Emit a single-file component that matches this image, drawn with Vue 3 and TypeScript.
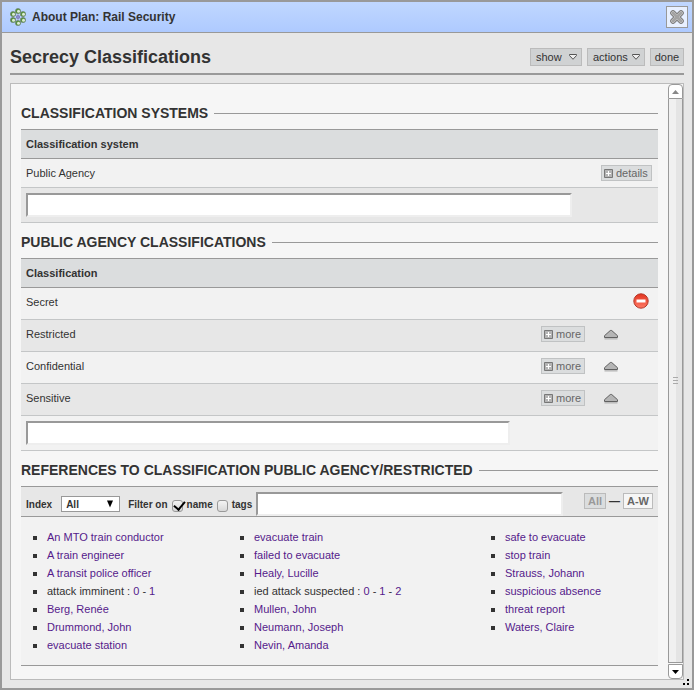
<script setup lang="ts">
import { ref } from 'vue'

interface RefPart {
  label: string
  linked: boolean
}

const link = (label: string): RefPart[] => [{ label, linked: true }]
const text = (label: string): RefPart => ({ label, linked: false })

const levels = ['Secret', 'Restricted', 'Confidential', 'Sensitive']

const columns: RefPart[][][] = [
  [
    link('An MTO train conductor'),
    link('A train engineer'),
    link('A transit police officer'),
    [text('attack imminent : '), ...link('0'), text(' - '), ...link('1')],
    link('Berg, Renée'),
    link('Drummond, John'),
    link('evacuate station'),
  ],
  [
    link('evacuate train'),
    link('failed to evacuate'),
    link('Healy, Lucille'),
    [text('ied attack suspected : '), ...link('0'), text(' - '), ...link('1'), text(' - '), ...link('2')],
    link('Mullen, John'),
    link('Neumann, Joseph'),
    link('Nevin, Amanda'),
  ],
  [
    link('safe to evacuate'),
    link('stop train'),
    link('Strauss, Johann'),
    link('suspicious absence'),
    link('threat report'),
    link('Waters, Claire'),
  ],
]

const petals = [
  [8, 3],
  [13, 6],
  [13, 12],
  [8, 15],
  [3, 12],
  [3, 6],
]

const newSystem = ref('')
const newLevel = ref('')
const indexOn = ref('All')
const byName = ref(true)
const byTags = ref(false)
const filter = ref('')
</script>

<template>
  <div class="window">
    <div class="titlebar">
      <svg class="logo" width="16" height="18" viewBox="0 0 16 18" aria-hidden="true">
        <path d="M8 3l5 3v6l-5 3-5-3V6zM8 3v12M3 6l10 6M13 6L3 12" fill="none" stroke="#a3a6c4" />
        <g v-for="([x, y], i) in petals" :key="i">
          <circle :cx="x" :cy="y" r="2.6" fill="#579239" stroke="#6b7d70" stroke-width=".6" />
          <circle :cx="x + 0.5" :cy="y + 0.3" r="1.5" fill="#dcebd6" />
        </g>
        <circle cx="8" cy="9" r="1.800" fill="#6a68b5" />
        <circle cx="8" cy="9" r=".8" fill="#b9bbe8" />
      </svg>
      <span class="caption">About Plan: Rail Security</span>
      <button class="close" type="button" aria-label="Close">
        <svg width="16" height="16" viewBox="0 0 16 16">
          <path d="M4 4l8 8M12 4l-8 8" stroke="#777" stroke-width="5.6" stroke-linecap="round" />
          <path d="M4 4l8 8M12 4l-8 8" stroke="#d0d0d0" stroke-width="3.8" stroke-linecap="round" />
          <path d="M4 4l8 8M12 4l-8 8" stroke="#a3a3a3" stroke-width="2.8" stroke-linecap="round" />
        </svg>
      </button>
    </div>

    <div class="body">
      <header class="header">
        <h1>Secrecy Classifications</h1>
        <div class="menu">
          <button v-for="name in ['show', 'actions']" :key="name" type="button" :class="name">
            {{ name }}
            <svg width="8" height="6" viewBox="0 0 8 6" aria-hidden="true">
              <path d="M.5.5h7v1L4 5.300.5 1.500z" fill="#eee" stroke="#555" />
            </svg>
          </button>
          <button type="button" class="done">done</button>
        </div>
      </header>

      <div class="panel">
        <main class="content">
          <h2><span>CLASSIFICATION SYSTEMS</span></h2>
          <table>
            <thead>
              <tr><th colspan="2">Classification system</th></tr>
            </thead>
            <tbody>
              <tr>
                <td>Public Agency</td>
                <td class="details-cell">
                  <button class="small" type="button">
                    <svg width="9" height="9" viewBox="0 0 9 9" aria-hidden="true">
                      <path d="M.5.5h8v8h-8z" fill="#b4b4b4" stroke="#777" />
                      <path d="M4.500 2v5M2 4.500h5" stroke="#fff" />
                    </svg>
                    details
                  </button>
                </td>
              </tr>
              <tr class="entry alt">
                <td colspan="2">
                  <div class="system-entry"><input v-model="newSystem" class="field" type="text" aria-label="New classification system" /></div>
                </td>
              </tr>
            </tbody>
          </table>

          <h2><span>PUBLIC AGENCY CLASSIFICATIONS</span></h2>
          <table>
            <thead>
              <tr><th colspan="4">Classification</th></tr>
            </thead>
            <tbody>
              <tr v-for="(level, i) in levels" :key="level" class="level" :class="{ alt: i % 2 === 1 }">
                <td>{{ level }}</td>
                <td class="more-cell">
                  <button v-if="i > 0" class="small" type="button">
                    <svg width="9" height="9" viewBox="0 0 9 9" aria-hidden="true">
                      <path d="M.5.5h8v8h-8z" fill="#b4b4b4" stroke="#777" />
                      <path d="M4.500 2v5M2 4.500h5" stroke="#fff" />
                    </svg>
                    more
                  </button>
                </td>
                <td class="up-cell">
                  <button v-if="i > 0" class="icon" type="button" aria-label="Move up">
                    <svg width="16" height="16" viewBox="0 0 16 16">
                      <path d="M1.500 12.800h13" stroke="#bbb" stroke-width="1.500" />
                      <path d="M7.300 4.500h1.400l5.800 5.200v1.800h-13V9.700z" fill="#b5b5b5" stroke="#606060" stroke-linejoin="round" />
                    </svg>
                  </button>
                </td>
                <td class="delete-cell">
                  <button v-if="i === 0" class="icon" type="button" aria-label="Delete">
                    <svg width="16" height="16" viewBox="0 0 16 16">
                      <defs>
                        <linearGradient id="stop-red" x1="0" y1="0" x2="0" y2="1">
                          <stop offset="0" stop-color="#e2341f" />
                          <stop offset="1" stop-color="#ff7a66" />
                        </linearGradient>
                      </defs>
                      <circle cx="8" cy="8" r="7.200" fill="url(#stop-red)" stroke="#b5382a" />
                      <path d="M3.500 6.500h9v3h-9z" fill="#fff" />
                    </svg>
                  </button>
                </td>
              </tr>
              <tr class="entry">
                <td colspan="4">
                  <div class="level-entry"><input v-model="newLevel" class="field" type="text" aria-label="New classification" /></div>
                </td>
              </tr>
            </tbody>
          </table>

          <h2><span>REFERENCES TO CLASSIFICATION PUBLIC AGENCY/RESTRICTED</span></h2>
          <div class="toolbar">
            <label for="index">Index</label>
            <span class="picker">
              <select id="index" v-model="indexOn">
                <option>All</option>
                <option>Name</option>
                <option>Tag</option>
              </select>
              <svg width="8" height="8" viewBox="0 0 8 8" aria-hidden="true"><path d="M1 .5h6L4 7.500z" fill="#000" /></svg>
            </span>
            <span>Filter on</span>
            <input id="by-name" v-model="byName" type="checkbox" />
            <label for="by-name">name</label>
            <input id="by-tags" v-model="byTags" type="checkbox" />
            <label for="by-tags">tags</label>
            <input v-model="filter" class="field filter" type="text" aria-label="Filter" />
            <nav class="range">
              <button type="button" disabled>All</button>
              <span>—</span>
              <button type="button">A-W</button>
            </nav>
          </div>
          <div class="references">
            <ul v-for="(column, c) in columns" :key="c">
              <li v-for="(item, r) in column" :key="r">
                <template v-for="(part, p) in item" :key="p">
                  <a v-if="part.linked" href="#">{{ part.label }}</a>
                  <template v-else>{{ part.label }}</template>
                </template>
              </li>
            </ul>
          </div>
        </main>

        <div class="scrollbar">
          <button class="arrow" type="button" aria-label="Scroll up">
            <svg width="7" height="4" viewBox="0 0 7 4"><path d="M0 4L3.500 0 7 4z" fill="#888" /></svg>
          </button>
          <div class="thumb"><i></i><i></i><i></i></div>
          <button class="arrow down" type="button" aria-label="Scroll down">
            <svg width="7" height="4" viewBox="0 0 7 4"><path d="M0 0h7L3.500 4z" fill="#000" /></svg>
          </button>
        </div>
      </div>
    </div>

    <svg class="grip" width="6" height="6" viewBox="0 0 6 6" aria-hidden="true">
      <path d="M4 0h2v2H4zM0 4h2v2H0zM4 4h2v2H4z" fill="#000" />
    </svg>
  </div>
</template>

<style>
body {
  background: #e7e7e7;
}
</style>

<style scoped>
* {
  box-sizing: border-box;
}

.window {
  position: relative;
  display: flex;
  flex-direction: column;
  min-height: 100vh;
  border: 2px solid #999;
  background: #e7e7e7;
  color: #333;
  font: 11px/15px "Liberation Sans", Arial, sans-serif;
}

button,
input,
select {
  margin: 0;
  font: inherit;
  color: inherit;
}

svg {
  display: block;
  flex: none;
}

.titlebar {
  display: flex;
  align-items: center;
  height: 31px;
  padding: 0 4px 0 8px;
  border-bottom: 1px solid #999;
  background: linear-gradient(#c0d7ff, #aecaff);
}

.caption {
  flex: 1;
  margin-left: 6px;
  font-size: 12px;
  font-weight: bold;
}

.close {
  display: grid;
  place-items: center;
  width: 22px;
  height: 22px;
  padding: 0;
  border: 1px solid #999;
  background: #e8f0ff;
}

.body {
  flex: 1;
  display: flex;
  flex-direction: column;
  padding: 0 8px 8px;
}

.header {
  display: flex;
  align-items: center;
  justify-content: space-between;
  height: 42px;
  padding-top: 8px;
  margin-bottom: 8px;
  border-bottom: 2px solid #999;
}

h1 {
  margin: 0;
  font-size: 18px;
  line-height: 20px;
}

.menu {
  display: flex;
  gap: 5px;
}

.menu button {
  display: flex;
  align-items: center;
  justify-content: space-between;
  height: 18px;
  padding: 0 4px 0 5px;
  border: 1px solid #bbb;
  background: #d0d2d3;
}

.menu .show {
  width: 52px;
}

.menu .actions {
  width: 58px;
}

.menu .done {
  justify-content: center;
  width: 34px;
  padding: 0;
}

.panel {
  flex: 1;
  display: flex;
  border: 1px solid #bbb;
  background: #f6f6f6;
}

.content {
  flex: 1;
  min-width: 0;
  padding: 10px;
}

h2 {
  display: flex;
  align-items: center;
  gap: 6px;
  margin: 12px 0 8px;
  font-size: 14px;
  line-height: 15px;
}

h2::after {
  content: "";
  flex: 1;
  height: 1px;
  background: #999;
}

table {
  width: 100%;
  border-spacing: 0;
  border-top: 1px solid #999;
  background: #f2f2f2;
}

th,
td {
  height: 29px;
  padding: 0 5px;
  border-bottom: 1px solid #c4c6c7;
  text-align: left;
}

th {
  border-bottom-color: #999;
  background: #dbddde;
}

.alt {
  background: #e7e7e7;
}

.details-cell {
  width: 62px;
}

.level td {
  height: 32px;
  padding-bottom: 2px;
}

.level .more-cell {
  width: 60px;
  padding-bottom: 3px;
}

.level .up-cell {
  width: 30px;
  padding: 0 0 4px 7px;
}

.level .delete-cell {
  width: 32px;
  padding: 0 0 6px 7px;
}

.entry td {
  height: 35px;
}

.system-entry {
  display: flex;
  padding-right: 81px;
}

.level-entry {
  display: flex;
  padding-right: 143px;
}

.field {
  width: 100%;
  height: 24px;
  padding: 0 4px;
  border: 2px solid;
  border-color: #999 #eee #eee #999;
  border-radius: 0;
  background: #fff;
  outline: none;
}

.small {
  display: flex;
  align-items: center;
  gap: 3px;
  height: 16px;
  padding: 0 3px 0 2px;
  border: 1px solid #c0c2c3;
  background: #dbddde;
  color: #666;
}

.icon {
  display: block;
  padding: 0;
  border: 0;
  background: none;
}

.toolbar {
  display: flex;
  align-items: flex-start;
  height: 31px;
  padding: 5px 5px 0;
  border: solid #999;
  border-width: 1px 0;
  background: #e7e7e7;
  font-size: 10px;
  font-weight: bold;
}

.toolbar > label,
.toolbar > span {
  margin-top: 5px;
  white-space: nowrap;
}

.toolbar .picker {
  display: grid;
  align-items: center;
  width: 59px;
  height: 16px;
  margin: 4px 8px 0 9px;
}

.picker select {
  grid-area: 1 / 1;
  width: 100%;
  height: 16px;
  padding: 0 4px;
  border: 1px solid #999;
  border-radius: 0;
  background: #fff;
  appearance: none;
}

.picker svg {
  grid-area: 1 / 1;
  justify-self: end;
  margin-right: 6px;
  pointer-events: none;
}

input[type="checkbox"] {
  flex: none;
  width: 11px;
  height: 12px;
  margin: 8px 4px 0;
  border: 1px solid #999;
  border-radius: 3px;
  background: linear-gradient(#f4f4f4, #d8d8d8);
  appearance: none;
}

input[type="checkbox"]:checked::before {
  content: "";
  display: block;
  width: 5px;
  height: 9px;
  margin: -2px 0 0 3px;
  border: solid #000;
  border-width: 0 2px 2px 0;
  transform: rotate(40deg);
}

.filter {
  flex: 1;
  min-width: 0;
  margin: 0 21px 0 4px;
  font-weight: normal;
}

.range {
  display: flex;
  align-items: center;
  gap: 3px;
  margin-top: 1px;
  font-size: 11px;
}

.range button {
  height: 16px;
  padding: 0 3px;
  border: 1px solid #bbb;
  background: #f6f6f6;
  color: #666;
}

.range button:disabled {
  background: #dbddde;
  color: #999;
}

.references {
  display: grid;
  grid-template-columns: 207fr 251fr 153fr;
  padding: 11px 0 11px 26px;
  border-bottom: 1px solid #999;
  background: #f2f2f2;
}

ul {
  margin: 0;
  padding: 0;
  list-style: none;
}

li {
  line-height: 18px;
}

li::before {
  content: "";
  float: left;
  width: 4px;
  height: 4px;
  margin: 8px 0 0 -14px;
  background: #333;
}

a {
  color: #551a8b;
  text-decoration: none;
}

.scrollbar {
  display: flex;
  flex-direction: column;
  width: 15px;
}

.arrow {
  display: grid;
  place-items: center;
  height: 15px;
  padding: 0;
  border: 1px solid #999;
  border-radius: 4px 4px 0 0;
  background: #fff;
}

.arrow.down {
  margin-top: 1px;
  border-radius: 0 0 4px 4px;
}

.thumb {
  flex: 1;
  display: flex;
  flex-direction: column;
  align-items: center;
  justify-content: center;
  gap: 2px;
  border: solid #999;
  border-width: 0 1px 1px;
  background: linear-gradient(90deg, #f0f0f0 50%, #e4e4e4 50%);
}

.thumb i {
  width: 5px;
  height: 1px;
  background: #aaa;
}

.grip {
  position: absolute;
  right: 3px;
  bottom: 3px;
}
</style>
